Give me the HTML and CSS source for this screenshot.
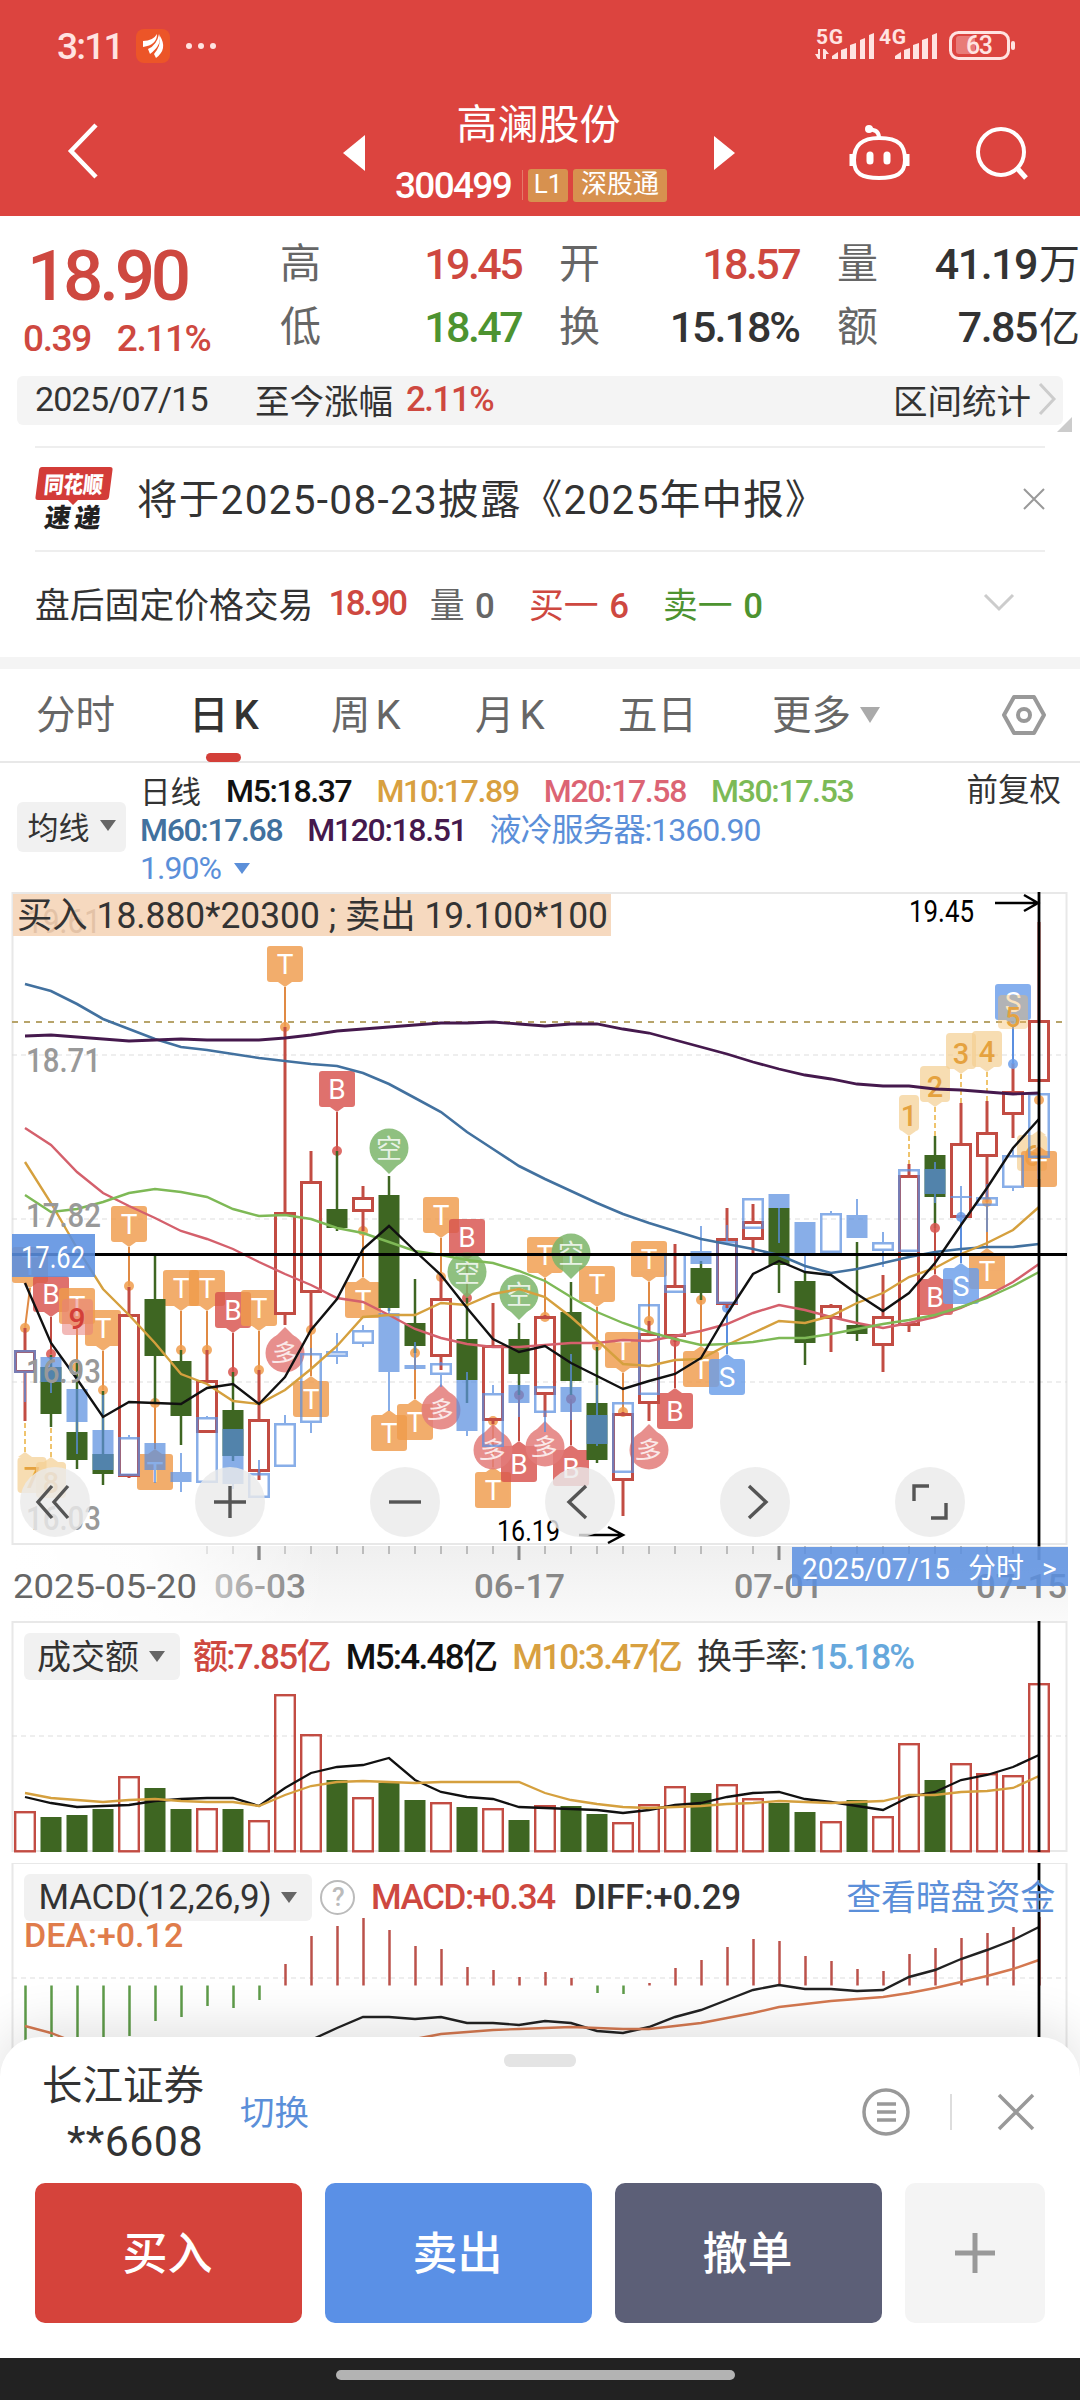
FILE: index.html
```html
<!DOCTYPE html>
<html lang="zh-CN">
<head>
  <meta charset="UTF-8" />
  <meta name="viewport" content="width=1080"/>
  <title>高澜股份 300499</title>
  <link rel="stylesheet" href="styles.css">
</head>
<body>
  <header class="header">
    <div class="status">
      <span class="time">3:11</span>
      <svg class="app-icon" width="34" height="34" viewBox="0 0 34 34">
        <rect width="34" height="34" rx="8" fill="#ec5528"/>
        <path d="M7 12 Q17 12 21 5 Q21 16 7 18 Z M12 20 Q21 16 23 5 Q27 15 14 25 Z M18 25 Q25 17 24 7 Q32 20 20 29 Z" fill="#fff"/>
      </svg>
      <span class="dots"><i></i><i></i><i></i></span>
      <svg class="signals" width="204" height="44" viewBox="814 24 204 44">
        <g fill="#ffe3e1">
          <text x="816" y="44" class="net" textLength="27">5G</text>
          <text x="879" y="44" class="net" textLength="27">4G</text>
          <path d="M815 54h3v-5h2v10h-2zM823 49h2l4 5h-3v5h-3z"/>
          <path d="M832 59v-3l6-4v7zM841 59v-9l6-2v11zM850 59v-14l6-2v16zM860 59v-19l5-2v21zM869 59v-24l5-2v26z"/>
          <path d="M895 59v-3l6-4v7zM904 59v-9l6-2v11zM913 59v-14l6-2v16zM922 59v-19l6-2v21zM932 59v-24l5-2v26z"/>
          <rect x="956" y="36" width="19" height="18" rx="3" opacity=".35"/>
          <rect x="1011" y="41" width="4" height="9" rx="2"/>
        </g>
        <rect x="950.5" y="32.500" width="58" height="26" rx="8" fill="none" stroke="#ffe3e1" stroke-width="3"/>
        <text x="966" y="54" fill="#ffe3e1" class="bat" textLength="27">63</text>
      </svg>
    </div>
    <div class="nav">
      <svg class="back" width="36" height="60" viewBox="0 0 36 60"><path d="M31 4L6 30L31 56" fill="none" stroke="#fff" stroke-width="4.500"/></svg>
      <svg class="prev" width="22" height="36" viewBox="0 0 22 36"><path d="M22 0V36L0 18z" fill="#fff"/></svg>
      <div class="stock">
        <div class="name">高澜股份</div>
        <div class="code"><span class="digits">300499</span><span class="sep"></span><span class="tag">L1</span><span class="tag wide">深股通</span></div>
      </div>
      <svg class="next" width="22" height="34" viewBox="0 0 22 34"><path d="M0 0V34L21 17z" fill="#fff"/></svg>
      <svg class="robot" width="64" height="60" viewBox="0 0 64 60" fill="none" stroke="#fff" stroke-width="4">
        <path d="M32 15C53 15 58 23 58 37C58 51 49 55 32 55C15 55 7 51 7 37C7 23 14 15 32 15Z"/>
        <path d="M32 15C32 8 28 7 22 6"/>
        <circle cx="22" cy="6" r="3" fill="#fff" stroke-width="2"/>
        <path d="M5 31v12M60 31v12" stroke-width="5"/>
        <path d="M23 32v6M40 32v6" stroke-width="7" stroke-linecap="round"/>
      </svg>
      <svg class="search" width="56" height="56" viewBox="0 0 56 56" fill="none" stroke="#fff" stroke-width="4">
        <circle cx="27" cy="27" r="23"/><path d="M43 43L52 53" stroke-width="5"/>
      </svg>
    </div>
  </header>

  <section class="quote">
    <div class="price">
      <div class="last num red">18.90</div>
      <div class="change num red"><span>0.39</span><span>2.11%</span></div>
    </div>
    <div class="cell"><label>高</label><span class="num red">19.45</span></div>
    <div class="cell"><label>开</label><span class="num red">18.57</span></div>
    <div class="cell"><label>量</label><span class="num">41.19<em>万</em></span></div>
    <div class="cell"><label>低</label><span class="num green">18.47</span></div>
    <div class="cell"><label>换</label><span class="num pct">15.18%</span></div>
    <div class="cell"><label>额</label><span class="num">7.85<em>亿</em></span></div>
  </section>

  <div class="range">
    <span class="range-date">2025/07/15</span>
    <span>至今涨幅</span>
    <span class="range-pct red">2.11%</span>
    <span class="range-link">区间统计</span>
    <svg width="20" height="36" viewBox="0 0 20 36"><path d="M2 3L16 18L2 33" fill="none" stroke="#ccc" stroke-width="3"/></svg>
    <i class="corner"></i>
  </div>

  <div class="news">
    <svg class="ths" width="80" height="66" viewBox="0 0 80 66">
      <path d="M7 1H75Q78 1 77.500 4L74 31Q73.500 34 70 34H43L38 39L33 34H3Q0 34 .5 31L4 4Q4.500 1 7 1Z" fill="#d33c38"/>
      <text x="8" y="27" transform="skewX(-6) translate(3 0)" fill="#fff" class="ths-a" textLength="59" lengthAdjust="spacingAndGlyphs">同花顺</text>
      <text x="10" y="61" transform="skewX(-8) translate(7 0)" fill="#222" class="ths-b" textLength="56">速递</text>
    </svg>
    <span class="news-text">将于2025-08-23披露《2025年中报》</span>
    <svg width="22" height="22" viewBox="0 0 22 22"><path d="M1 1L21 21M21 1L1 21" stroke="#999" stroke-width="2"/></svg>
  </div>

  <div class="after">
    <span>盘后固定价格交易</span>
    <span class="num2 red a1">18.90</span>
    <span class="gray a2">量 <b>0</b></span>
    <span class="red a3">买一 <b>6</b></span>
    <span class="green a4">卖一 <b>0</b></span>
    <svg width="32" height="20" viewBox="0 0 32 20"><path d="M2 2L16 16L30 2" fill="none" stroke="#ccc" stroke-width="3"/></svg>
  </div>

  <nav class="tabs">
    <span>分时</span>
    <span class="active">日<b>K</b></span>
    <span>周<b>K</b></span>
    <span>月<b>K</b></span>
    <span>五日</span>
    <span>更多<i></i></span>
    <svg width="44" height="42" viewBox="0 0 44 42" fill="none" stroke="#999" stroke-width="4"><path d="M12 3H32L42 21L32 39H12L2 21Z" stroke-linejoin="round"/><circle cx="22" cy="21" r="6"/></svg>
  </nav>

  <div class="legend">
    <div class="pill">均线<i></i></div>
    <div class="ma">
      <div><span class="cn">日线</span><span class="m5">M5:18.37</span><span class="m10">M10:17.89</span><span class="m20">M20:17.58</span><span class="m30">M30:17.53</span></div>
      <div><span class="m60">M60:17.68</span><span class="m120">M120:18.51</span><span class="idx up">液冷服务器:1360.90</span></div>
      <div><span class="idx">1.90%</span><i></i></div>
    </div>
    <div class="adj">前复权</div>
  </div>

  <svg id="kline" class="kline" width="1080" height="730" viewBox="0 891 1080 730"></svg>

  <section class="panel volume">
    <svg id="volume" class="plot" width="1080" height="242" viewBox="0 1621 1080 242"></svg>
    <div class="row">
      <div class="pill"><span>成交额</span><i></i></div>
      <span class="red">额:7.85亿</span>
      <span class="m5">M5:4.48亿</span>
      <span class="m10">M10:3.47亿</span>
      <span class="rate">换手率:<em>15.18%</em></span>
    </div>
  </section>

  <section class="panel macd">
    <svg id="macd" class="plot" width="1080" height="215" viewBox="0 1863 1080 215"></svg>
    <div class="row">
      <div class="pill">MACD(12,26,9)<i></i></div>
      <span class="help">?</span>
      <span class="red">MACD:+0.34</span>
      <span class="diff">DIFF:+0.29</span>
      <a>查看暗盘资金</a>
    </div>
    <div class="dea">DEA:+0.12</div>
  </section>

  <section class="sheet">
    <div class="grip"></div>
    <div class="account">
      <div class="broker"><div>长江证券</div><div class="acc-no">**6608</div></div>
      <a>切换</a>
      <svg width="48" height="48" viewBox="0 0 48 48" fill="none" stroke="#999" stroke-width="3.500"><circle cx="24" cy="24" r="22"/><path d="M15 16H34M15 24H34M15 32H34"/></svg>
      <i class="bar"></i>
      <svg width="38" height="38" viewBox="0 0 38 38"><path d="M2 2L36 36M36 2L2 36" stroke="#999" stroke-width="3.500"/></svg>
    </div>
    <div class="actions">
      <button class="buy">买入</button>
      <button class="sell">卖出</button>
      <button class="cancel">撤单</button>
      <button class="more"><svg width="42" height="42" viewBox="0 0 42 42"><path d="M1 21H41M21 1V41" stroke="#999" stroke-width="5"/></svg></button>
    </div>
  </section>
  <footer class="home"><i></i></footer>

  <script src="script.js"></script>
</body>
</html>
```
FILE: styles.css
```css
* { box-sizing: border-box; }
body {
  margin: 0;
  width: 1080px;
  height: 2400px;
  overflow: hidden;
  background: #fff;
  color: #333;
  font-family: Roboto, "Noto Sans CJK SC", sans-serif;
}
i, em { font-style: normal; }
svg { display: block; flex: none; }
.red { color: #ce4840; }
.green { color: #4d9330; }
.gray { color: #666; }
.num { letter-spacing: -0.06em; font-weight: 500; }
.num em { font-size: 41px; font-weight: 400; letter-spacing: 0; margin-left: 2px; }
.num.pct { letter-spacing: -2px; }

/* header */
.header {
  height: 216px;
  background: #dc443f;
  color: #fff;
}
.status {
  display: flex;
  height: 92px;
  padding: 0 62px 0 57px;
  align-items: center;
  color: #ffe3e1;
}
.time {
  width: 79px;
  font-size: 37px;
  font-weight: 500;
  letter-spacing: -1.8px;
}
.dots { display: flex; gap: 6px; margin-left: 16px; }
.dots i { width: 6px; height: 6px; border-radius: 3px; background: #ffe3e1; }
.signals { margin-left: auto; }
.net { font-size: 21px; font-weight: 700; }
.bat { font-size: 25px; font-weight: 500; }
.nav {
  display: flex;
  align-items: flex-start;
  height: 124px;
  padding-left: 65px;
}
.back { margin-top: 29px; }
.prev { margin: 43px 0 0 242px; }
.stock { width: 349px; padding-right: 2px; text-align: center; }
.name { margin-top: 3px; font-size: 41px; line-height: 60px; }
.code { display: flex; justify-content: center; align-items: center; height: 60px; margin-left: -21px; }
.digits { font-size: 37px; font-weight: 500; letter-spacing: -1.7px; }
.sep { width: 1px; height: 30px; margin: 0 5px 0 11px; background: #e5796a; }
.tag {
  width: 40px;
  height: 33px;
  margin-right: 5px;
  border-radius: 3px;
  background: #d7914f;
  font-size: 26px;
  line-height: 31px;
}
.tag.wide { width: 94px; margin: 0 -6px 0 0; }
.next { margin-top: 44px; }
.robot { margin: 31px 0 0 111px; }
.search { margin: 33px 0 0 63px; }

/* quote */
.quote {
  display: grid;
  grid-template-columns: 280px 279px 278px 243px;
  grid-template-rows: 63px 63px;
  height: 160px;
  padding-top: 17px;
}
.price { grid-row: 1 / 3; }
.last { padding-left: 27px; font-size: 71px; font-weight: 500; line-height: 86px; }
.change { display: flex; gap: 26px; padding-left: 23px; font-size: 37px; line-height: 40px; letter-spacing: -1.4px; }
.cell { display: flex; justify-content: space-between; font-size: 43px; line-height: 62px; padding-right: 38px; }
.cell:nth-child(4), .cell:nth-child(7) { padding-right: 0; }
.cell:nth-child(4) .num, .cell:nth-child(7) .num { letter-spacing: -1.5px; }
.cell label { font-size: 41px; color: #666; }
.range {
  position: relative;
  display: flex;
  align-items: center;
  width: 1046px;
  height: 49px;
  margin: 0 17px;
  padding: 0 5px 4px 18px;
  border-radius: 6px;
  background: #f4f4f4;
  font-size: 34.500px;
}
.range-date { width: 220px; font-size: 34px; letter-spacing: -.8px; }
.range-pct { margin-left: 13px; font-weight: 500; letter-spacing: -1.3px; }
.range-link { margin-left: auto; margin-right: 7px; }
.corner {
  position: absolute;
  right: -9px;
  bottom: -7px;
  border-style: solid;
  border-width: 0 0 15px 15px;
  border-color: transparent transparent #ccc transparent;
}
.news {
  display: flex;
  align-items: center;
  height: 106px;
  margin: 21px 35px 0;
  border: solid #eee;
  border-width: 2px 0;
}
.ths-a { font-size: 23px; font-weight: 900; }
.ths-b { font-size: 26px; font-weight: 900; }
.news-text { flex: 1; margin-left: 22px; padding-bottom: 6px; font-size: 40.500px; letter-spacing: 1.3px; }
.after {
  display: flex;
  align-items: center;
  height: 105px;
  padding: 0 65px 3px 35px;
  font-size: 34.800px;
}
.after svg { margin-left: auto; }
.after b { font-weight: 500; margin-left: 2px; }
.num2 { font-weight: 500; letter-spacing: -2.3px; }
.a1 { margin-left: 15px; }
.a2 { margin-left: 24px; }
.a3 { margin-left: 34px; }
.a4 { margin-left: 34px; }

/* period tabs */
.tabs {
  display: grid;
  grid-template-columns: 153px 142px 144px 143px 154px 230px 44px;
  align-items: center;
  height: 106px;
  padding-left: 36px;
  border-top: 12px solid #f4f4f4;
  border-bottom: 2px solid #e8e8e8;
  font-size: 39.500px;
  color: #666;
}
.tabs span { position: relative; line-height: 92px; top: 1px; }
.tabs b { margin-left: 5px; font-size: 40px; font-weight: 400; }
.tabs .active { color: #333; font-weight: 500; }
.tabs .active b { font-weight: 500; }
.tabs .active::after {
  content: "";
  position: absolute;
  left: 17px;
  bottom: 0;
  width: 35px;
  height: 9px;
  border-radius: 5px;
  background: #d33f39;
}
.tabs i {
  display: inline-block;
  margin-left: 9px;
  vertical-align: 6px;
  border: solid transparent;
  border-width: 16px 10px 0;
  border-top-color: #aaa;
}

/* moving average legend */
.legend { display: flex; height: 128px; padding: 9px 19px 0 17px; }
.pill {
  display: flex;
  align-items: center;
  justify-content: center;
  gap: 10px;
  border-radius: 6px;
  background: #f1f1f1;
  white-space: nowrap;
}
.pill i { border: solid transparent; border-width: 11px 8px 0; border-top-color: #666; }
.legend .pill { width: 109px; height: 50px; margin-top: 30px; padding-bottom: 3px; font-size: 31px; }
.ma { margin-left: 14px; font-size: 32px; letter-spacing: -1.35px; white-space: nowrap; }
.ma div { display: flex; align-items: center; gap: 25px; height: 38.500px; }
.ma span { font-weight: 500; }
.ma .cn { font-size: 30.500px; font-weight: 400; letter-spacing: 0; margin: -3px 0 0 0; }
.ma .idx { font-weight: 400; letter-spacing: -1px; }
.ma .up { margin: -5px 0 0 -2px; }
.ma i { margin-left: -12px; border: solid transparent; border-width: 11px 8px 0; border-top-color: #5b8fd9; }
.adj { margin-left: auto; font-size: 31.500px; line-height: 38px; }
.m5 { color: #111; }
.m10 { color: #d8a040; }
.m20 { color: #dc6474; }
.m30 { color: #7cba56; }
.m60 { color: #41719e; }
.m120 { color: #45194d; }
.idx { color: #5b8fd9; }

.kline { overflow: hidden; }
.kline text { font-family: Roboto, "Noto Sans CJK SC", sans-serif; }

/* sub charts */
.panel { position: relative; overflow: hidden; }
.plot { position: absolute; left: 0; top: 0; }
.volume { height: 242px; padding-top: 12px; }
.macd { height: 215px; padding-top: 11px; }
.row {
  position: relative;
  display: flex;
  align-items: center;
  height: 47px;
  padding: 0 25px 0 24px;
  font-size: 35px;
  letter-spacing: -1.4px;
  white-space: nowrap;
}
.row .pill { width: 156px; height: 47px; font-size: 34px; letter-spacing: 0; }
.volume .pill span { margin: -5px 0 0 -2px; }
.volume .row > span { margin: -6px 0 0 16px; font-weight: 500; letter-spacing: -1.7px; }
.volume .row > .red { margin-left: 13px; }
.volume .row > .rate { font-weight: 400; letter-spacing: -1px; }
.rate em { margin-left: 3px; color: #66a8dc; font-weight: 500; letter-spacing: -1.9px; }
.macd .pill { width: 288px; font-size: 35px; letter-spacing: -.2px; }
.macd .row > span { font-weight: 500; }
.help {
  width: 35px;
  height: 35px;
  margin: 0 16px 0 8px;
  border: 2px solid #bbb;
  border-radius: 50%;
  font-size: 26px;
  line-height: 31px;
  text-align: center;
  color: #bbb;
}
.row .diff { margin-left: 19px; letter-spacing: -.2px; font-weight: 400; }
.row a { margin: -6px 0 0 auto; color: #5b8fd9; letter-spacing: -.2px; }
.dea { position: relative; padding-left: 24px; font-size: 34px; font-weight: 500; line-height: 29px; color: #e07c4b; letter-spacing: 0; }

/* trade sheet */
.sheet {
  position: relative;
  height: 321px;
  margin-top: -41px;
  padding-top: 17px;
  border-radius: 40px 40px 0 0;
  background: #fff;
  box-shadow: 0 -10px 50px rgba(0,0,0,.12);
}
.grip { width: 72px; height: 13px; margin: 0 auto; border-radius: 6px; background: #e4e4e4; }
.account { display: flex; align-items: center; height: 90px; padding: 0 45px 0 42px; }
.broker { padding-top: 3px; font-size: 40.500px; line-height: 55px; text-align: right; }
.acc-no { padding-right: 1px; font-size: 43px; letter-spacing: .4px; }
.account a { margin: -4px auto 0 36px; font-size: 34.500px; color: #5b8fd9; }
.bar { width: 2px; height: 36px; margin: 0 45px 0 40px; background: #ddd; }
.actions {
  display: grid;
  grid-template-columns: 267px 267px 267px 140px;
  gap: 23px;
  margin-top: 26px;
  padding-left: 35px;
}
.actions button {
  display: flex;
  align-items: center;
  justify-content: center;
  height: 140px;
  padding: 0 2px 6px 0;
  border: none;
  border-radius: 10px;
  color: #fff;
  font-family: inherit;
  font-size: 45px;
  font-weight: 500;
}
.actions .buy { background: #d5433b; }
.actions .sell { background: #5a90e6; }
.actions .cancel { background: #5c5f77; }
.actions .more { padding: 0; background: #f4f4f4; }
.home { position: relative; height: 42px; padding-top: 12px; background: #222; }
.home i { display: block; width: 399px; height: 10px; margin-left: 336px; border-radius: 5px; background: #b3b3b3; }
```
FILE: script.js
```js
const RED = "#c24c43", GREEN = "#3e6622", BLUE = "#5b8fe0", GOLD = "#f09c4c";
const X = i => 25 + 26 * i;

const line = (x1, y1, x2, y2, c, w = 2, extra = "") =>
  `<line x1="${x1}" y1="${y1}" x2="${x2}" y2="${y2}" stroke="${c}" stroke-width="${w}" ${extra}/>`;
const rect = (x, y, w, h, c, extra = "") =>
  `<rect x="${x}" y="${y}" width="${w}" height="${h}" fill="${c}" ${extra}/>`;
const text = (x, y, s, size, c, len, extra = "") =>
  `<text x="${x}" y="${y}" font-size="${size}" fill="${c}" ${len ? `textLength="${len}" lengthAdjust="spacingAndGlyphs"` : ""} ${extra}>${s}</text>`;
const poly = (ys, c, w = 2, start = 0) =>
  `<polyline points="${ys.map((y, i) => X(i + start) + "," + y).join(" ")}" fill="none" stroke="${c}" stroke-width="${w}"/>`;
const hollow = (i, top, bot, c, w = 3) =>
  `<rect x="${X(i) - 11 + w / 2}" y="${top + w / 2}" width="${22 - w}" height="${Math.max(bot - top - w, 1)}" fill="none" stroke="${c}" stroke-width="${w}"/>`;
const grid = y => line(12, y, 1067, y, "#ddd", 1, 'stroke-dasharray="5 4"');

// [type, high, top, bottom, low]
const candles = [
  ["r",1328,1350,1373,1421],["g",1355,1367,1414,1427],["g",1363,1432,1460,1469],["g",1391,1454,1474,1485],
  ["r",1287,1314,1477,1478],["g",1255,1299,1356,1403],["g",1350,1361,1416,1445],["r",1350,1380,1433,1433],
  ["g",1372,1410,1456,1461],["r",1370,1419,1472,1480],["r",1027,1212,1315,1325],["r",1151,1181,1293,1330],
  ["g",1151,1209,1228,1231],["r",1186,1197,1212,1231],["g",1176,1195,1308,1311],["g",1279,1323,1346,1353],
  ["r",1275,1298,1357,1370],["g",1298,1339,1380,1403],["r",1303,1345,1421,1424],["g",1323,1339,1374,1395],
  ["r",1315,1316,1395,1417],["g",1282,1312,1381,1395],["g",1347,1403,1460,1463],["r",1412,1413,1481,1516],
  ["r",1321,1333,1404,1421],["r",1244,1285,1337,1342],["g",1261,1268,1293,1300],["r",1208,1238,1305,1308],
  ["r",1204,1221,1240,1253],["g",1208,1208,1265,1293],["g",1272,1281,1343,1365],["r",1304,1305,1319,1352],
  ["g",1242,1325,1334,1341],["r",1275,1316,1346,1372],["r",1164,1175,1326,1332],["g",1136,1155,1197,1228],
  ["r",1103,1143,1218,1218],["r",1101,1132,1157,1202],["r",1063,1091,1115,1138],["r",922,1020,1082,1082]
];
// the compared sector index: [solid?, high, top, bottom, low]
const sector = [
  [0,1350,1350,1373,1402],[1,1357,1357,1382,1393],[1,1389,1389,1422,1454],[1,1395,1430,1470,1470],
  [0,1435,1437,1476,1476],[1,1443,1443,1470,1483],[1,1453,1472,1482,1492],[0,1416,1417,1483,1483],
  [1,1429,1429,1484,1489],[0,1460,1473,1498,1498],[0,1415,1423,1467,1467],[0,1348,1353,1423,1433],
  [0,1333,1351,1357,1364],[0,1325,1330,1344,1347],[1,1308,1313,1372,1411],[1,1342,1365,1369,1370],
  [0,1362,1363,1375,1387],[1,1372,1380,1431,1436],[0,1385,1393,1447,1447],[1,1385,1385,1403,1417],
  [0,1386,1386,1413,1432],[1,1354,1387,1412,1420],[1,1385,1415,1444,1446],[0,1403,1402,1473,1473],
  [0,1304,1304,1395,1395],[0,1253,1253,1293,1293],[1,1226,1251,1264,1264],[0,1225,1241,1304,1277],
  [0,1198,1198,1229,1229],[1,1194,1194,1208,1243],[1,1222,1222,1253,1272],[0,1211,1213,1253,1253],
  [1,1199,1215,1238,1238],[0,1232,1242,1251,1267],[0,1169,1169,1252,1252],[1,1162,1169,1194,1203],
  [1,1186,1196,1198,1217],[0,1184,1197,1206,1232],[0,1150,1155,1188,1191],[0,1093,1093,1158,1158]
];
const ma5 = [1283,1343,1379,1417,1402,1403,1404,1388,1384,1404,1377,1330,1299,1249,1226,1251,1275,1308,1339,1352,1346,1363,1376,1389,1381,1374,1358,1314,1274,1261,1272,1275,1294,1311,1293,1263,1225,1188,1148,1119];
const ma10 = [1162,1203,1248,1289,1315,1343,1374,1384,1401,1404,1390,1369,1346,1317,1315,1315,1303,1305,1294,1289,1297,1317,1340,1364,1366,1360,1359,1345,1333,1321,1323,1316,1303,1293,1277,1268,1254,1243,1230,1207];
const ma20 = [1128,1145,1172,1193,1206,1218,1231,1239,1249,1262,1274,1285,1298,1302,1315,1329,1338,1344,1347,1347,1345,1343,1343,1340,1341,1336,1331,1324,1313,1305,1310,1317,1323,1328,1323,1317,1308,1296,1282,1264];
const ma30 = [1195,1212,1209,1202,1193,1189,1192,1197,1209,1216,1215,1219,1228,1233,1242,1251,1255,1260,1263,1271,1281,1297,1312,1323,1332,1339,1345,1344,1342,1338,1338,1334,1329,1324,1320,1315,1307,1298,1286,1272];
const ma60 = [984,991,1004,1019,1029,1039,1047,1050,1054,1058,1061,1064,1066,1073,1084,1098,1112,1132,1149,1166,1179,1191,1203,1214,1223,1231,1239,1244,1249,1255,1266,1273,1269,1263,1257,1252,1249,1247,1247,1244];
const ma120 = [1036,1035,1037,1039,1041,1040,1039,1040,1040,1040,1038,1035,1031,1029,1027,1025,1023,1023,1022,1024,1026,1024,1024,1029,1033,1040,1047,1054,1062,1069,1075,1079,1084,1086,1086,1089,1090,1092,1094,1093];

// [label, index, box top, box side (1 above the dot, -1 below), dot y, x shift]
const marks = [
  ["T",0,1247,1,1328,5],["B",1,1276,1,1354],["T",2,1288,1,1367],["T",3,1310,1,1390],["T",4,1206,1,1286],
  ["T",5,1454,-1,1403],["T",6,1270,1,1350],["T",7,1270,1,1350],["B",8,1292,1,1372],["T",9,1290,1,1370],
  ["T",10,946,1,1027],["T",11,1381,-1,1330],["B",12,1071,1,1151],["T",13,1282,-1,1231],["T",14,1415,-1,0],
  ["T",15,1404,-1,1353],["T",16,1197,1,1277],["B",17,1219,1,1298],["T",18,1472,-1,1421],["B",19,1446,-1,1395],
  ["T",20,1237,1,1317],["B",21,1450,-1,1399],["T",22,1266,1,1346],["T",23,1332,1,1412],["T",24,1241,1,1321],
  ["B",25,1393,-1,1342],["T",26,1351,-1,1300],["S",27,1359,-1,1308],["B",35,1279,-1,1228],["T",37,1253,-1,1202],
  ["S",36,1268,-1,1217],["S",38,984,1,1064],["T",39,1151,-1,1100]
];
const markColor = { T: GOLD, B: "#d8534e", S: "#6a9eea" };
const leadColor = { T: "#e08a44", B: RED, S: BLUE };
// round bull / bear hints
const hints = [["空",14,1148],["空",17,1272],["空",19,1294],["空",21,1253],["多",10,1353],["多",16,1410],["多",18,1450],["多",20,1447],["多",24,1450]];

function drawMark([s, i, top, dir, dot, dx = 0]) {
  const x0 = X(i), x = x0 + dx, edge = dir > 0 ? top + 36 : top, tip = edge + dir * 5;
  let g = "";
  if (dot) g += line(x, tip, x0, dot, leadColor[s], 2) + `<circle cx="${x0}" cy="${dot}" r="5" fill="${markColor[s]}" opacity=".85"/>`;
  g += `<g opacity=".82">${rect(x - 18, top, 36, 36, markColor[s], 'rx="3"')}<path d="M${x - 7} ${edge}L${x} ${tip}L${x + 7} ${edge}z" fill="${markColor[s]}"/></g>`;
  return g + text(x, top + 28, s, 28, "#fff", 0, 'text-anchor="middle"');
}
function drawHint([s, i, y]) {
  const x = X(i), up = s === "多", c = up ? "#e37c7a" : "#7cb66a", d = up ? -1 : 1;
  return `<g opacity=".85"><circle cx="${x}" cy="${y}" r="19.500" fill="${c}"/><path d="M${x - 11} ${y + d * 15}L${x} ${y + d * 26}L${x + 11} ${y + d * 15}z" fill="${c}"/></g>`
    + text(x, y + 10, s, 26, "#fff", 0, `text-anchor="middle" opacity=".8" ${up ? `transform="rotate(12 ${x} ${y})"` : ""}`);
}
function drawCount(s, i, top, w, end, cx = X(i), up = false) {
  const x = X(i), e = up ? top : top + 36, d = up ? -1 : 1;
  return (end ? line(x, e + d * 5, x, end, "#efc46e", 2, 'stroke-dasharray="5 3"') : "")
    + `<g opacity=".7">${rect(cx - w / 2, top, w, 36, "#f5cf92", 'rx="4"')}<path d="M${x - 7} ${e}L${x} ${e + d * 5}L${x + 7} ${e}z" fill="#f5cf92"/></g>`
    + text(cx, top + 31, s, 29, "#e5a23f", 0, 'text-anchor="middle" font-weight="500"');
}

let k = `<defs>
  <linearGradient id="fade" y2="0" x2="1"><stop offset="0" stop-color="#fff"/><stop offset=".12" stop-color="#fff" stop-opacity=".9"/><stop offset=".3" stop-color="#fff" stop-opacity="0"/></linearGradient>
  <linearGradient id="shade" x2="0" y2="1"><stop offset="0" stop-color="#efefef"/><stop offset="1" stop-color="#fafafa"/></linearGradient>
</defs>`;
k += `<rect x="12.500" y="893" width="1054" height="651" fill="none" stroke="#e8e8e8" stroke-width="2"/>`;
k += grid(1055) + grid(1219) + grid(1382);
k += line(12, 1022, 1067, 1022, "#b7a46a", 2, 'stroke-dasharray="6 6"');
marks.slice(0, 28).forEach(m => k += drawMark(m));
hints.forEach(h => k += drawHint(h));
k += drawCount("7", 0, 1457, 29, 1421, 32, true) + drawCount("8", 1, 1462, 30, 1427, X(1), true);
k += drawCount("1", 34, 1095, 20, 1164) + drawCount("2", 35, 1066, 30, 1136) + drawCount("3", 36, 1033, 30, 1103) + drawCount("4", 37, 1031, 30, 1101);
k += drawCount("6", 39, 1135, 30, 0, 1032, true);
k += `<g opacity=".55">${rect(X(2) - 15, 1299, 31, 36, "#e8807c", 'rx="4"')}</g>` + text(X(2), 1329, "9", 30, "#d33f39", 0, 'text-anchor="middle" font-weight="500"');

candles.forEach(([t, hi, top, bot, lo], i) => {
  const x = X(i);
  if (t === "g") k += line(x, hi, x, lo, GREEN, 2.5) + rect(x - 10.5, top, 21, bot - top, GREEN);
  else k += line(x, hi, x, top, RED, 3) + line(x, bot, x, lo, RED, 3) + hollow(i, top, bot, RED);
});
marks.slice(28).forEach(m => k += drawMark(m));
sector.forEach(([solid, hi, top, bot, lo], i) => {
  const x = X(i);
  k += `<g opacity=".72">`;
  if (solid) k += line(x, hi, x, lo, BLUE, 2) + rect(x - 10.5, top, 21, bot - top, BLUE);
  else k += line(x, hi, x, top, BLUE, 2) + line(x, bot, x, Math.max(lo, bot), BLUE, 2) + hollow(i, top, bot, BLUE, 2.5);
  k += `</g>`;
});
// the fifth count sits low over the S mark
k += `<g opacity=".4">${rect(X(38) - 15, 995, 30, 34, "#f5b860", 'rx="4"')}</g>` + text(X(38), 1027, "5", 27, "#e5a23f", 0, 'text-anchor="middle" font-weight="500"');
k += poly(ma60, "#42719f", 2.6) + poly(ma120, "#45194d", 2.8) + poly(ma20, "#d4606c", 2.4) + poly(ma10, "#d5a03e", 2.4) + poly(ma30, "#7eb956", 2.4) + poly(ma5, "#111", 2.4);

// price scale
[["18.71", 1072], ["17.82", 1227], ["16.93", 1383], ["16.03", 1530]].forEach(([s, y]) => k += text(26, y, s, 34, "#999", 75, 'font-weight="500"'));
k += rect(13, 894, 598, 42, "#f6d9bf") + text(26, 933, "19.61", 34, "#e3c2a6", 75);
k += text(17, 928, "买入 18.880*20300 ; 卖出 19.100*100", 36, "#333", 591);
k += text(909, 922, "19.45", 31, "#000", 65) + `<path d="M995 903H1038M1024 895L1038 903L1024 911" fill="none" stroke="#000" stroke-width="2.5"/>`;
k += text(497, 1541, "16.19", 29, "#000", 63) + `<path d="M579 1535H623M608 1527L623 1535L608 1543" fill="none" stroke="#000" stroke-width="2.5"/>`;
k += line(12, 1254.5, 1067, 1254.5, "#000", 2.8);
k += rect(12, 1234, 83, 43, BLUE, 'opacity=".88"') + text(21, 1268, "17.62", 32, "#fff", 64);

// round tool buttons
const tools = ["M-3 -16L-17 0L-3 16M13 -16L-1 0L13 16", "M-16 0H16M0 -16V16", "M-16 0H16", "M6 -16L-11 0L6 16", "M-6 -16L11 0L-6 16", "M-16 -1V-16H-1M16 1V16H1"];
tools.forEach((d, i) => {
  k += `<g transform="translate(${55 + 175 * i} 1502)"><circle r="35" fill="#eaeaea" opacity=".82"/><path d="${d}" fill="none" stroke="#555" stroke-width="3.4"/></g>`;
});

// time axis
k += rect(12, 1546, 1056, 75, "url(#shade)");
for (let i = 7; i < 40; i++) k += i % 10 === 9 ? line(X(i), 1546, X(i), 1560, "#888", 3) : line(X(i), 1546, X(i), 1554, "#888", 1);
k += text(214, 1598, "06-03", 34, "#777", 92, 'font-weight="500"') + rect(12, 1546, 1056, 75, "url(#fade)") + line(X(9), 1546, X(9), 1560, "#888", 3) + text(13, 1598, "2025-05-20", 34, "#666", 184);
k += text(474, 1598, "06-17", 34, "#888", 91, 'font-weight="500"') + text(734, 1598, "07-01", 34, "#888", 89, 'font-weight="500"') + text(976, 1598, "07-15", 34, "#888", 91, 'font-weight="500"');
k += rect(792, 1547, 276, 39, BLUE, 'opacity=".85"');
k += text(802, 1579, "2025/07/15", 30, "#fff", 148) + text(968, 1578, "分时", 28, "#fff", 56) + text(1042, 1578, "&gt;", 28, "#fff");
k += line(1039, 892, 1039, 1546, "#000", 2.8);
document.getElementById("kline").innerHTML = k;

// turnover
const vol = [1811,1817,1815,1809,1776,1788,1809,1808,1809,1820,1694,1734,1780,1797,1783,1800,1802,1807,1808,1820,1805,1806,1814,1822,1804,1786,1793,1784,1798,1803,1812,1821,1800,1816,1743,1780,1763,1773,1775,1683];
const vol5 = [1797,1803,1807,1806,1805,1801,1799,1798,1798,1806,1788,1773,1767,1765,1758,1780,1792,1797,1799,1807,1808,1809,1810,1813,1810,1805,1803,1797,1793,1792,1799,1802,1806,1810,1797,1792,1780,1775,1767,1755];
const vol10 = [1793,1798,1800,1802,1800,1799,1801,1802,1802,1806,1795,1786,1782,1781,1782,1783,1782,1782,1782,1782,1793,1800,1804,1807,1808,1807,1806,1804,1803,1801,1802,1803,1802,1801,1795,1795,1792,1791,1788,1776];
let v = `<rect x="12.500" y="1622" width="1054" height="229" fill="none" stroke="#e8e8e8" stroke-width="2"/>` + grid(1736);
vol.forEach((y, i) => v += candles[i][0] === "g" ? rect(X(i) - 10.5, y, 21, 1852 - y, GREEN) : hollow(i, y, 1852.5, RED, 2.4));
v += poly(vol5, "#111", 2.3) + poly(vol10, "#d5a03e", 2.3) + line(1039, 1621, 1039, 1852, "#000", 2.8);
document.getElementById("volume").innerHTML = v;

// macd
const bars = [2060,2060,2060,2050,2036,2021,2017,2006,2008,2000,1964,1936,1926,1918,1930,1946,1949,1967,1970,1977,1972,1978,1993,1994,1983,1968,1960,1947,1939,1941,1956,1961,1969,1971,1954,1948,1938,1933,1927,1917];
const diff = [2040,2028,2017,2017,2019,2017,2023,2023,2025,2021,2023,2031,2033,2027,2017,2010,2000,1990,1985,1989,1989,1991,1990,1977,1970,1959,1950,1940,1927];
const dea = [2039,2034,2032,2030,2029,2028,2027,2028,2029,2029,2026,2023,2018,2013,2007,2004,2001,1999,1997,1993,1988,1982,1976,1969,1960];
let m = `<rect x="12.500" y="1863" width="1054" height="300" fill="none" stroke="#e8e8e8" stroke-width="2"/>` + grid(1978);
bars.forEach((y, i) => m += line(X(i) + .5, 1985.5, X(i) + .5, y, y > 1986 ? "#5e9b49" : "#bb524b", 2.5));
m += poly(diff, "#222", 2.4, 11) + poly([2026, 2033, 2043], "#d47850", 2.4) + poly(dea, "#d47850", 2.4, 15) + line(1039, 1863, 1039, 2078, "#000", 2.8);
document.getElementById("macd").innerHTML = m;
```
